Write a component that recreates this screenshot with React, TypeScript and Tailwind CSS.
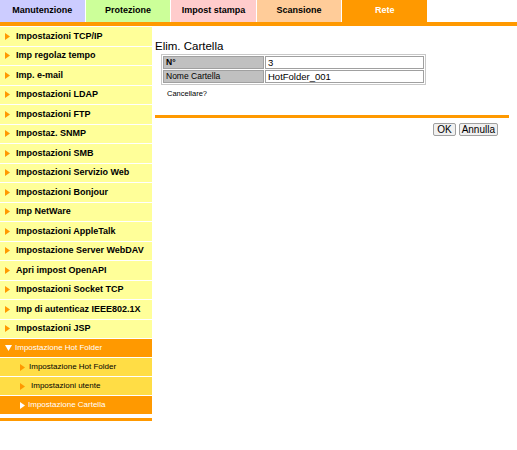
const tabs = [
  { label: "Manutenzione", cls: "bg-[#ccccff] text-black" },
  { label: "Protezione", cls: "bg-[#ccff99] text-black" },
  { label: "Impost stampa", cls: "bg-[#ffcccc] text-black" },
  { label: "Scansione", cls: "bg-[#ffcc99] text-black" },
  { label: "Rete", cls: "bg-[#ff9900] text-white" },
];

const menu = [
  "Impostazioni TCP/IP",
  "Imp regolaz tempo",
  "Imp. e-mail",
  "Impostazioni LDAP",
  "Impostazioni FTP",
  "Impostaz. SNMP",
  "Impostazioni SMB",
  "Impostazioni Servizio Web",
  "Impostazioni Bonjour",
  "Imp NetWare",
  "Impostazioni AppleTalk",
  "Impostazione Server WebDAV",
  "Apri impost OpenAPI",
  "Impostazioni Socket TCP",
  "Imp di autenticaz IEEE802.1X",
  "Impostazioni JSP",
];

function Arrow({ color }: { color: string }) {
  return (
    <svg width="5" height="7" viewBox="0 0 5 7" className="shrink-0">
      <polygon points="0,0 5,3.5 0,7" fill={color} />
    </svg>
  );
}

export default function App() {
  return (
    <div className="w-[517px] h-[450px] bg-white font-['Liberation_Sans',Arial,sans-serif] overflow-hidden">
      <div className="flex gap-px h-[22px] w-[427px]">
        {tabs.map((t) => (
          <div
            key={t.label}
            className={`flex-1 flex items-center justify-center text-[9px] font-bold ${t.cls}`}
          >
            {t.label}
          </div>
        ))}
      </div>
      <div className="h-1 bg-[#ff9900]" />

      <div className="flex">
        <nav className="w-[152px] pt-px">
          {menu.map((m) => (
            <div
              key={m}
              className="h-[18.5px] mb-px bg-[#ffff99] flex items-center gap-[6px] pl-[5px] text-[9px] font-bold text-black"
            >
              <Arrow color="#ff9900" />
              <span>{m}</span>
            </div>
          ))}
          <div className="h-[18px] mb-px bg-[#ff9900] flex items-center gap-[3px] pl-[5px] text-[8px] text-white">
            <svg width="7" height="6" viewBox="0 0 7 6" className="shrink-0">
              <polygon points="0,0 7,0 3.5,6" fill="#ffffff" />
            </svg>
            <span>Impostazione Hot Folder</span>
          </div>
          <div className="h-[18px] mb-px bg-[#ffdd45] flex items-center gap-[4px] pl-[20px] text-[8px] text-black">
            <Arrow color="#ff9900" />
            <span>Impostazione Hot Folder</span>
          </div>
          <div className="h-[18px] mb-px bg-[#ffdd45] flex items-center gap-[6px] pl-[20px] text-[8px] text-black">
            <Arrow color="#ff9900" />
            <span>Impostazioni utente</span>
          </div>
          <div className="h-[18px] bg-[#ff9900] flex items-center gap-[3px] pl-[20px] text-[8px] text-white">
            <Arrow color="#ffffff" />
            <span>Impostazione Cartella</span>
          </div>
          <div className="h-[3px] mt-[4px] bg-[#ff9900]" />
        </nav>

        <main className="pl-[3px] w-[357px]">
          <h1 className="mt-[13px] text-[11.5px] leading-[14px] text-black">Elim. Cartella</h1>
          <table className="mt-px ml-[6px] w-[265px] border border-[#c8c8c8] border-separate border-spacing-px text-black">
            <tbody>
              <tr>
                <td className="w-[101px] h-[13px] bg-[#c0c0c0] border border-[#a0a0a0] px-[2px] text-[8.5px] leading-[11px] font-bold">
                  N°
                </td>
                <td className="border border-[#a0a0a0] px-[2px] text-[9.5px] leading-[11px]">3</td>
              </tr>
              <tr>
                <td className="h-[13px] bg-[#c0c0c0] border border-[#a0a0a0] px-[2px] text-[8.5px] leading-[11px]">
                  Nome Cartella
                </td>
                <td className="border border-[#a0a0a0] px-[2px] text-[9.5px] leading-[11px]">HotFolder_001</td>
              </tr>
            </tbody>
          </table>
          <p className="mt-[4px] ml-[12px] text-[7.5px] leading-[10px] text-black">Cancellare?</p>
          <div className="mt-[16px] h-[3px] w-[354px] bg-[#ff9900]" />
          <div className="flex justify-end gap-[3px] mt-[5px] pr-[11px]">
            <button className="h-[13px] px-[3px] bg-[#f0f0f0] border border-[#a0a0a0] rounded-[2px] text-[10px] leading-[10px] text-black">
              OK
            </button>
            <button className="h-[13px] px-[2px] bg-[#f0f0f0] border border-[#a0a0a0] rounded-[2px] text-[10px] leading-[10px] text-black">
              Annulla
            </button>
          </div>
        </main>
      </div>
    </div>
  );
}
